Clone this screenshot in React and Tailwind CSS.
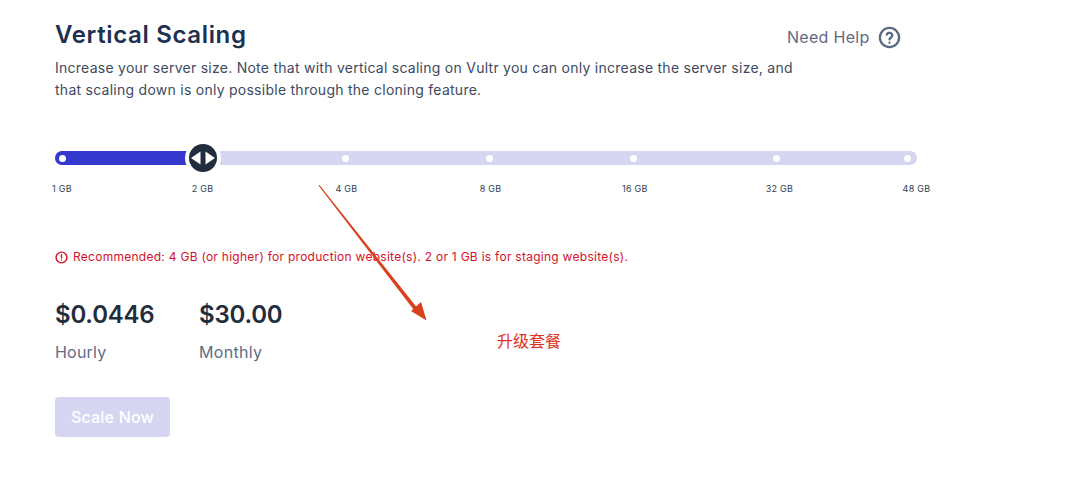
const font = { fontFamily: '"Inter", "Noto Sans", sans-serif' };

const labels = [
  ["1 GB", "w-[20px]", "ml-[-3px]"],
  ["2 GB", "w-[23px]", "ml-[119px]"],
  ["4 GB", "w-[23px]", "ml-[121px]"],
  ["8 GB", "w-[23px]", "ml-[121px]"],
  ["16 GB", "w-[25px]", "ml-[120px]"],
  ["32 GB", "w-[29px]", "ml-[118px]"],
  ["48 GB", "w-[29px]", "ml-[108px]"],
];

function Dot({ className = "" }) {
  return <span className={`w-[7px] h-[7px] rounded-full bg-white shrink-0 ${className}`} />;
}

export default function App() {
  return (
    <div className="relative w-[1068px] h-[477px] overflow-hidden bg-white pl-[55px] pt-[19px]" style={font}>
      <div className="flex items-start w-[846px]">
        <div className="w-[732px] shrink-0">
          <h1 className="text-[24px] leading-[32px] font-semibold text-[#1e2f4f] tracking-[0.65px]">Vertical Scaling</h1>
          <p className="mt-[6px] text-[14px] leading-[22px] text-[#3c4a62] tracking-[0.26px] w-[745px]">
            Increase your server size. Note that with vertical scaling on Vultr you can only increase the server size, and that scaling down is only possible through the cloning feature.
          </p>
        </div>
        <div className="flex items-center gap-[8px] pt-[6px] shrink-0 whitespace-nowrap text-[#5f6b85] text-[16px] leading-[24px] tracking-[0.3px]">
          <span>Need Help</span>
          <svg width="23" height="23" viewBox="0 0 24 24" fill="none" stroke="#5a6a85" strokeWidth="2.4" strokeLinecap="round" strokeLinejoin="round">
            <circle cx="12" cy="12" r="10" />
            <path d="M9.1 9a3 3 0 0 1 5.8 1c0 2-2.9 2.4-2.9 4" />
            <path d="M12 17.5h.01" />
          </svg>
        </div>
      </div>

      <div className="relative mt-[50px] w-[862px] h-[14px] rounded-full bg-[#d6d6f2] flex items-center pl-[4px]">
        <div className="absolute left-0 top-0 h-[14px] w-[133px] rounded-l-full bg-[#3538cd]" />
        <Dot className="relative" />
        <Dot className="ml-[276px]" />
        <Dot className="ml-[137px]" />
        <Dot className="ml-[137px]" />
        <Dot className="ml-[136px]" />
        <Dot className="ml-[124px]" />
        <div className="absolute left-[130px] top-[-11px] w-[36px] h-[36px] rounded-full bg-white flex items-center justify-center">
          <svg width="28" height="28" viewBox="0 0 28 28">
            <circle cx="14" cy="14" r="14" fill="#1f2d3d" />
            <path d="M11.5 7.5 L11.5 20.5 L2 14 Z" fill="#fff" />
            <path d="M16.5 7.5 L16.5 20.5 L26 14 Z" fill="#fff" />
          </svg>
        </div>
      </div>

      <div className="flex mt-[18px] text-[9px] leading-[12px] text-[#2f3c52] tracking-[0.25px]">
        {labels.map(([t, w, m]) => (
          <span key={t} className={`${w} ${m} whitespace-nowrap text-center`}>{t}</span>
        ))}
      </div>

      <div className="flex items-center gap-[5px] mt-[54px] text-[12px] leading-[16px] text-[#d5102a]">
        <svg width="13" height="13" viewBox="0 0 24 24" fill="none" stroke="#d5102a" strokeWidth="2.6" strokeLinecap="round">
          <circle cx="12" cy="12" r="10" />
          <path d="M12 7v6" />
          <path d="M12 16.5h.01" />
        </svg>
        <span className="tracking-[0.27px]">Recommended: 4 GB (or higher) for production website(s). 2 or 1 GB is for staging website(s).</span>
      </div>

      <div className="flex gap-[44px] mt-[34px]">
        <div className="w-[100px]">
          <div className="text-[24px] leading-[32px] font-semibold text-[#1f2d3d] tracking-[-0.2px]">$0.0446</div>
          <div className="mt-[9px] text-[16px] leading-[24px] text-[#5f6b85] tracking-[0.2px]">Hourly</div>
        </div>
        <div>
          <div className="text-[24px] leading-[32px] font-semibold text-[#1f2d3d] tracking-[-0.2px]">$30.00</div>
          <div className="mt-[9px] text-[16px] leading-[24px] text-[#5f6b85] tracking-[0.3px]">Monthly</div>
        </div>
      </div>

      <button className="mt-[33px] w-[115px] h-[40px] rounded-[4px] bg-[#d6d6f2] text-white text-[16px] font-medium tracking-[0.2px]">Scale Now</button>

      <svg className="absolute left-[310px] top-[180px]" width="125" height="145" viewBox="0 0 125 145">
        <path d="M8.5 5.5 L9.5 5 L108.5 129.5 L105.5 132 Z" fill="#d9401c" />
        <path d="M116.5 140.5 L101 131 L111 122 Z" fill="#d9401c" />
      </svg>
      <span className="absolute left-[497px] top-[330px] text-[16px] leading-[20px] text-[#e0301e]" style={{ fontFamily: '"Noto Sans CJK SC", sans-serif' }}>升级套餐</span>
    </div>
  );
}
